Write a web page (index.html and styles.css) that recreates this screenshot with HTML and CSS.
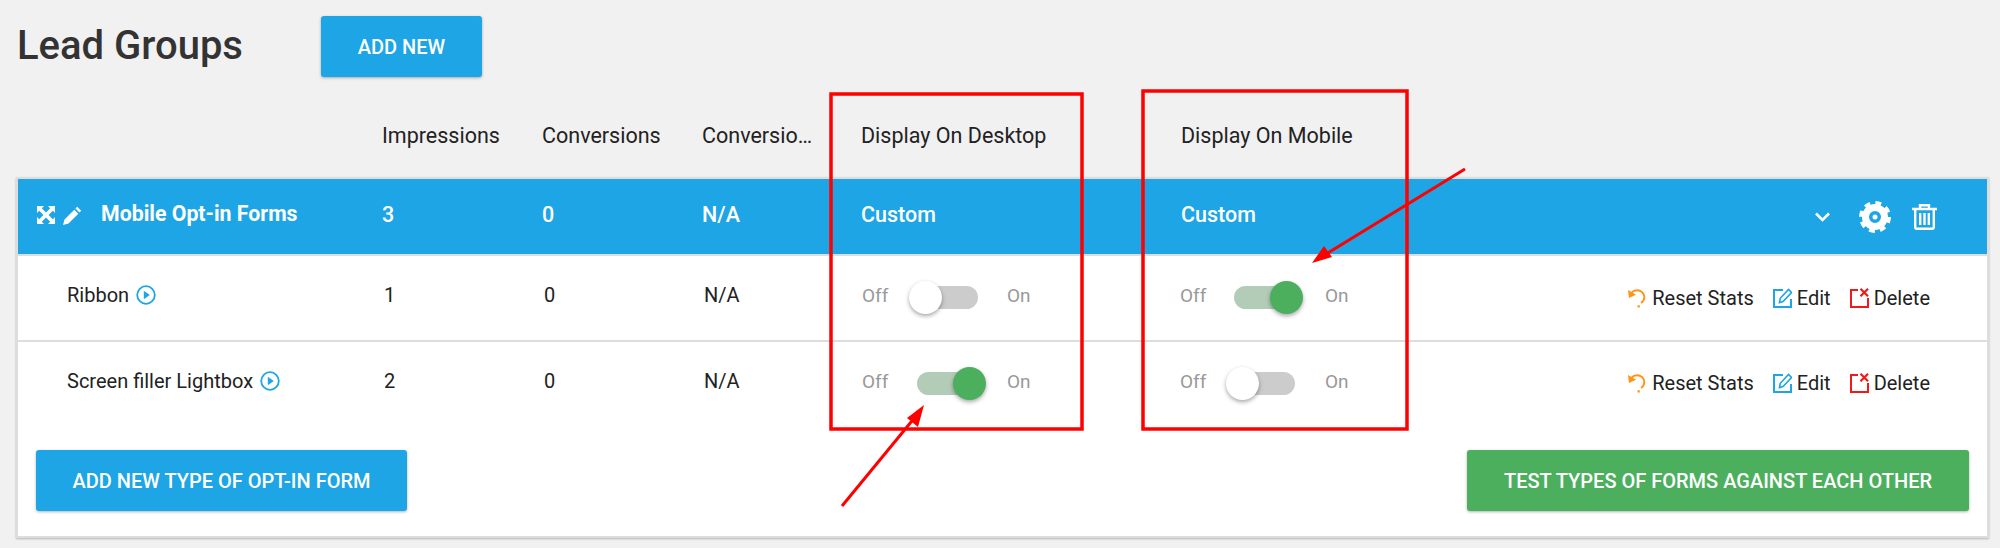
FILE: index.html
```html
<!DOCTYPE html>
<html lang="en">
<head>
    <meta charset="UTF-8">
    <title>Lead Groups</title>
    <link rel="stylesheet" href="styles.css">
</head>
<body>
    <div class="page-head">
        <h1>Lead Groups</h1>
        <button class="btn btn-add">ADD NEW</button>
    </div>

    <div class="cols col-heads">
        <div></div>
        <div>Impressions</div>
        <div>Conversions</div>
        <div>Conversio…</div>
        <div>Display On Desktop</div>
        <div>Display On Mobile</div>
        <div></div>
    </div>

    <div class="card">
        <div class="cols group-row">
            <div class="group-name">
                <svg class="ico-expand" viewBox="0 0 18 18"><path fill="#fff" d="M0 0h7L4.800 2.200 9 6.400l4.200-4.200L11 0h7v7l-2.200-2.200L11.600 9l4.200 4.200L18 11v7h-7l2.200-2.200L9 11.600l-4.200 4.200L7 18H0v-7l2.200 2.200L6.400 9 2.200 4.800 0 7z"/></svg>
                <svg class="ico-pencil" viewBox="0 0 19 19"><path fill="#fff" d="M14.200.8l4 4-1.800 1.800-4-4zM11.300 3.700l4 4-9.800 9.800L0 19l1.500-5.500z"/></svg>
                <span>Mobile Opt-in Forms</span>
            </div>
            <div>3</div>
            <div>0</div>
            <div>N/A</div>
            <div>Custom</div>
            <div>Custom</div>
            <div class="group-tools">
                <svg class="ico-chevron" viewBox="0 0 15 10"><path fill="none" stroke="#fff" stroke-width="2.600" d="M1 1.500l6.500 6.500L14 1.500"/></svg>
                <svg class="ico-gear" viewBox="0 0 32 32">
                    <circle cx="16" cy="16" r="9.500" fill="none" stroke="#fff" stroke-width="7"/>
                    <circle cx="16" cy="16" r="13.500" fill="none" stroke="#fff" stroke-width="5" stroke-dasharray="5.600 5"/>
                    <circle cx="16" cy="16" r="2.500" fill="#fff"/>
                </svg>
                <svg class="ico-trash" viewBox="0 0 25 27"><path fill="none" stroke="#fff" stroke-width="2.400" d="M0 6h25M8 6V2.200h9V6M3.200 6v18c0 1 .8 1.800 1.800 1.800h15c1 0 1.800-.8 1.800-1.800V6"/><path fill="none" stroke="#fff" stroke-width="2.400" d="M8.200 10v12M12.500 10v12M16.800 10v12"/></svg>
            </div>
        </div>

        <div class="cols form-row">
            <div class="form-name">Ribbon
                <svg class="ico-play" viewBox="0 0 20 20"><circle cx="10" cy="10" r="8.800" fill="none" stroke="#1da5e6" stroke-width="1.800"/><path fill="#1da5e6" d="M7.800 5.800l6 4.200-6 4.200z"/></svg>
            </div>
            <div class="num">1</div>
            <div class="num">0</div>
            <div class="num">N/A</div>
            <div class="switch-wrap desktop">
                <span class="switch-label">Off</span>
                <span class="switch"><span class="thumb"></span></span>
                <span class="switch-label">On</span>
            </div>
            <div class="switch-wrap mobile">
                <span class="switch-label">Off</span>
                <span class="switch on"><span class="thumb"></span></span>
                <span class="switch-label">On</span>
            </div>
            <div class="row-actions">
                <svg class="ico-act" viewBox="0 0 20 20"><path fill="none" stroke="#ff9517" stroke-width="2" d="M3.500 4.500C5 2.700 7 1.800 9.500 1.800c4.300 0 7.700 3.200 7.700 7.200 0 2.600-1.400 4.900-3.500 6.200"/><path fill="#ff9517" d="M0 1.500l1 8.500 7.500-3.500zM10 17.500h2.400v2.400H10z"/></svg>
                <span class="act-text">Reset Stats</span>
                <svg class="ico-act act-gap" viewBox="0 0 19 20"><path fill="none" stroke="#1da5e6" stroke-width="2" d="M10 2H1v17h17v-8"/><path fill="none" stroke="#1da5e6" stroke-width="1.600" d="M6.500 14.500l.8-4.200L15.500 1.500l3 3-8.500 9z"/></svg>
                <span class="act-text">Edit</span>
                <svg class="ico-act act-gap" viewBox="0 0 19 20"><path fill="none" stroke="#f01a1a" stroke-width="2" d="M8 2H1v17h17v-9"/><path fill="none" stroke="#f01a1a" stroke-width="2.200" d="M10.500.8l7.500 7.400M18 .8l-7.500 7.400"/></svg>
                <span class="act-text">Delete</span>
            </div>
        </div>

        <div class="cols form-row last">
            <div class="form-name">Screen filler Lightbox
                <svg class="ico-play" viewBox="0 0 20 20"><circle cx="10" cy="10" r="8.800" fill="none" stroke="#1da5e6" stroke-width="1.800"/><path fill="#1da5e6" d="M7.800 5.800l6 4.200-6 4.200z"/></svg>
            </div>
            <div class="num">2</div>
            <div class="num">0</div>
            <div class="num">N/A</div>
            <div class="switch-wrap desktop">
                <span class="switch-label">Off</span>
                <span class="switch on"><span class="thumb"></span></span>
                <span class="switch-label">On</span>
            </div>
            <div class="switch-wrap mobile">
                <span class="switch-label">Off</span>
                <span class="switch"><span class="thumb"></span></span>
                <span class="switch-label">On</span>
            </div>
            <div class="row-actions">
                <svg class="ico-act" viewBox="0 0 20 20"><path fill="none" stroke="#ff9517" stroke-width="2" d="M3.500 4.500C5 2.700 7 1.800 9.500 1.800c4.300 0 7.700 3.200 7.700 7.200 0 2.600-1.400 4.900-3.500 6.200"/><path fill="#ff9517" d="M0 1.500l1 8.500 7.500-3.500zM10 17.500h2.400v2.400H10z"/></svg>
                <span class="act-text">Reset Stats</span>
                <svg class="ico-act act-gap" viewBox="0 0 19 20"><path fill="none" stroke="#1da5e6" stroke-width="2" d="M10 2H1v17h17v-8"/><path fill="none" stroke="#1da5e6" stroke-width="1.600" d="M6.500 14.500l.8-4.200L15.500 1.500l3 3-8.500 9z"/></svg>
                <span class="act-text">Edit</span>
                <svg class="ico-act act-gap" viewBox="0 0 19 20"><path fill="none" stroke="#f01a1a" stroke-width="2" d="M8 2H1v17h17v-9"/><path fill="none" stroke="#f01a1a" stroke-width="2.200" d="M10.500.8l7.500 7.400M18 .8l-7.500 7.400"/></svg>
                <span class="act-text">Delete</span>
            </div>
        </div>

        <div class="card-foot">
            <button class="btn btn-type">ADD NEW TYPE OF OPT-IN FORM</button>
            <button class="btn btn-test">TEST TYPES OF FORMS AGAINST EACH OTHER</button>
        </div>
    </div>

    <!-- red annotations drawn over the screenshot -->
    <svg class="marks" viewBox="0 0 2000 548">
        <rect x="831" y="94" width="251" height="335" fill="none" stroke="#f00" stroke-width="3.500"/>
        <rect x="1143" y="91" width="264" height="338" fill="none" stroke="#f00" stroke-width="3.500"/>
        <path d="M1465 169L1318 259" fill="none" stroke="#f00" stroke-width="3"/>
        <path d="M1312 263l12-17 8 11z" fill="#f00"/>
        <path d="M842 506L916 416" fill="none" stroke="#f00" stroke-width="3"/>
        <path d="M924 405l-17 13 11 9z" fill="#f00"/>
    </svg>
</body>
</html>
```

FILE: styles.css
```css
* {
    box-sizing: border-box;
}

html, body {
    height: 548px;
    overflow: hidden;
}

body {
    margin: 0;
    position: relative;
    background: #f1f1f1;
    color: #222;
    font-family: Roboto, sans-serif;
    font-size: 20px;
}

.page-head {
    display: flex;
    align-items: center;
    padding: 16px 0 0 17px;
}

.page-head h1 {
    width: 304px;
    margin: -2px 0 0;
    font-size: 40px;
    font-weight: 500;
    color: #333;
}

.btn {
    height: 61px;
    border: 0;
    border-radius: 3px;
    color: #fff;
    font-family: Roboto, sans-serif;
    font-size: 20px;
    font-weight: 500;
    box-shadow: 0 1px 3px rgba(0, 0, 0, 0.3);
}

.btn-add {
    width: 161px;
    background: #1da5e6;
}

.cols {
    display: grid;
    grid-template-columns: 364px 160px 160px 159px 320px 320px 1fr;
    align-items: center;
}

.col-heads {
    margin-left: 18px;
    padding: 48px 0 30px;
    line-height: 22px;
    font-size: 21.500px;
}

.card {
    height: 361px;
    margin: 0 11px 0 16px;
    background: #fff;
    border: 2px solid #ddd;
    box-shadow: 0 1px 2px rgba(0, 0, 0, 0.25);
}

.group-row {
    height: 77px;
    background: #1da5e6;
    border-bottom: 2px solid #ddd;
    color: #fff;
    font-size: 21.500px;
    font-weight: 500;
}

.group-row > div {
    padding-bottom: 4px;
}

.group-row .group-name {
    display: flex;
    align-items: center;
    padding: 0 0 3px 19px;
}

.group-name span {
    margin: 0 0 4px 19px;
    font-size: 21.300px;
    font-weight: 700;
}

.ico-expand {
    width: 18px;
    height: 18px;
}

.ico-pencil {
    width: 19px;
    height: 19px;
    margin-left: 8px;
}

.group-row .group-tools {
    display: flex;
    align-items: center;
    justify-content: flex-end;
    padding: 0 50px 0 0;
}

.ico-chevron {
    width: 15px;
    height: 10px;
}

.ico-gear {
    width: 32px;
    height: 32px;
    margin-left: 29px;
}

.ico-trash {
    width: 25px;
    height: 27px;
    margin-left: 21px;
}

.form-row {
    height: 86px;
    padding-bottom: 1px;
    border-bottom: 2px solid #ddd;
}

.form-row.last {
    border-bottom: 0;
    height: 83px;
}

.num {
    padding: 0 0 5px 2px;
}

.form-name {
    display: flex;
    align-items: center;
    padding: 0 0 5px 49px;
}

.ico-play {
    width: 20px;
    height: 20px;
    margin-left: 7px;
}

.switch-wrap {
    display: flex;
    align-items: center;
}

.switch-wrap.desktop {
    margin-left: 1px;
}

.switch-wrap.mobile {
    margin-left: -1px;
}

.switch-wrap.mobile .switch {
    margin: 0 30px 0 28px;
}

.switch-label {
    width: 26px;
    margin-bottom: 4px;
    color: #999;
    font-size: 19px;
}

.switch {
    position: relative;
    width: 61px;
    height: 23px;
    margin: 0 29px;
    border-radius: 12px;
    background: #ccc;
}

.switch.on {
    background: #b3ccb8;
}

/* knob hangs over both ends of the track */
.thumb {
    position: absolute;
    top: -5px;
    left: -8px;
    width: 33px;
    height: 33px;
    border-radius: 50%;
    background: #fff;
    box-shadow: 0 2px 4px rgba(0, 0, 0, 0.35);
}

.switch.on .thumb {
    left: auto;
    right: -8px;
    background: #4caf5e;
}

.row-actions {
    display: flex;
    align-items: center;
    justify-content: flex-end;
    padding-right: 57px;
}

.ico-act {
    width: 19px;
    height: 20px;
    margin-right: 5px;
    flex: none;
}

.act-gap {
    margin-left: 19px;
}

.card-foot {
    display: flex;
    justify-content: space-between;
    padding: 25px 18px 0 18px;
}

.btn-type {
    width: 371px;
    background: #1da5e6;
}

.btn-test {
    width: 502px;
    background: #4caf5e;
}

.marks {
    position: absolute;
    top: 0;
    left: 0;
    width: 2000px;
    height: 548px;
    pointer-events: none;
}
```
